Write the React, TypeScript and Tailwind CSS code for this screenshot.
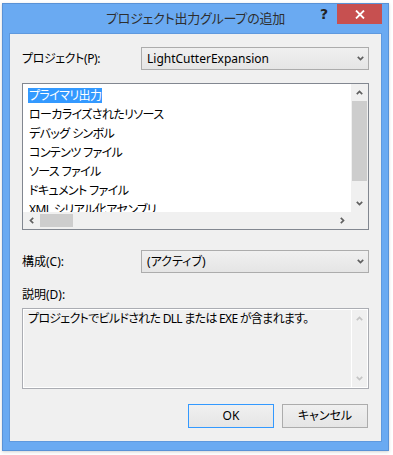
import React from 'react';

const items = [
  'プライマリ出力',
  'ローカライズされたリソース',
  'デバッグ シンボル',
  'コンテンツ ファイル',
  'ソース ファイル',
  'ドキュメント ファイル',
  'XML シリアル化アセンブリ',
];

const Chevron = ({ dir, color = '#606060' }: { dir: 'up' | 'down' | 'left' | 'right'; color?: string }) => {
  const d = {
    up: 'M0.8 4.2 L3.5 1.5 L6.2 4.2',
    down: 'M0.8 0.8 L3.5 3.5 L6.2 0.8',
    left: 'M4.2 0.8 L1.5 3.5 L4.2 6.2',
    right: 'M0.8 0.8 L3.5 3.5 L0.8 6.2',
  }[dir];
  const vertical = dir === 'up' || dir === 'down';
  return (
    <svg width={vertical ? 7 : 5} height={vertical ? 5 : 7} viewBox={vertical ? '0 0 7 5' : '0 0 5 7'}>
      <path d={d} fill="none" stroke={color} strokeWidth="1.7" />
    </svg>
  );
};

const Combo = ({ value }: { value: string }) => (
  <div className="w-[228px] h-[23px] border border-[#acacac] bg-gradient-to-b from-[#f0f0f0] to-[#e5e5e5] flex items-center pl-[5px] pr-[4px]">
    <span className="flex-1 text-[12px] leading-none text-black">{value}</span>
    <Chevron dir="down" />
  </div>
);

const Button = ({ label, focused }: { label: string; focused?: boolean }) => (
  <div
    className={
      'w-[86px] h-[24px] flex items-center justify-center text-[12px] text-black bg-gradient-to-b from-[#f0f0f0] to-[#e5e5e5] border ' +
      (focused ? 'border-[#3399ff]' : 'border-[#acacac]')
    }
  >
    {label}
  </div>
);

export default function App() {
  return (
    <div className="w-[393px] h-[455px] bg-white pt-[3px] pl-[2px] [font-family:'Noto_Sans','Noto_Sans_CJK_JP',sans-serif] [font-feature-settings:'palt']">
      <div className="w-[387px] h-[448px] bg-[#6aaaf2] border border-[#5a92d6] flex flex-col shadow-[0_1px_3px_rgba(0,0,0,0.18)]">
        {/* title bar */}
        <div className="h-[29px] relative flex items-center justify-center">
          <span className="text-[13px] tracking-[-0.2px] text-[#2e2e2e] leading-none">プロジェクト出力グループの追加</span>
          <div className="absolute top-0 right-[6px] flex">
            <div className="w-[26px] h-[20px] flex items-center justify-center text-[14px] font-bold text-[#222] leading-none [font-family:'DejaVu_Sans',sans-serif]">
              ?
            </div>
            <div className="w-[45px] h-[20px] bg-[#c75050] flex items-center justify-center">
              <svg width="10" height="9" viewBox="0 0 10 9">
                <path d="M1 0.5 L9 8.5 M9 0.5 L1 8.5" stroke="white" strokeWidth="1.8" />
              </svg>
            </div>
          </div>
        </div>

        {/* client area */}
        <div className="mx-[6px] h-[409px] bg-[#f0f0f0] border border-[#5f99de] flex flex-col px-[12px]">
          <div className="mt-[13px] h-[23px] flex items-center">
            <span className="w-[119px] text-[12px] tracking-[-0.4px] text-black">プロジェクト(P):</span>
            <Combo value="LightCutterExpansion" />
          </div>

          {/* list box */}
          <div className="mt-[13px] w-[347px] h-[147px] border border-[#828790] bg-white grid grid-cols-[1fr_17px] grid-rows-[1fr_17px]">
            <div className="overflow-hidden pt-[2px] pl-[5px]">
              {items.map((t, i) => (
                <div key={t} className="h-[19px] flex items-center">
                  <span
                    className={
                      'h-[15px] leading-[15px] px-[1px] text-[12px] tracking-[-0.6px] whitespace-nowrap ' +
                      (i === 0 ? 'bg-[#3399ff] text-white' : 'text-black')
                    }
                  >
                    {t}
                  </span>
                </div>
              ))}
            </div>
            <div className="row-span-2 bg-[#f0f0f0] flex flex-col">
              <div className="h-[17px] flex items-center justify-center">
                <Chevron dir="up" />
              </div>
              <div className="h-[80px] mx-[1px] bg-[#cdcdcd]" />
              <div className="flex-1" />
              <div className="h-[17px] flex items-center justify-center">
                <Chevron dir="down" />
              </div>
              <div className="h-[17px]" />
            </div>
            <div className="bg-[#f0f0f0] flex items-center">
              <div className="w-[17px] h-[17px] flex items-center justify-center">
                <Chevron dir="left" />
              </div>
              <div className="w-[33px] h-[13px] bg-[#cdcdcd]" />
              <div className="flex-1" />
              <div className="w-[17px] h-[17px] flex items-center justify-center">
                <Chevron dir="right" />
              </div>
            </div>
          </div>

          <div className="mt-[20px] h-[23px] flex items-center">
            <span className="w-[119px] text-[12px] text-black">構成(C):</span>
            <Combo value="(アクティブ)" />
          </div>

          <div className="mt-[14px] h-[16px] flex items-center text-[12px] text-black">説明(D):</div>

          {/* description */}
          <div className="mt-[5px] w-[347px] h-[81px] border border-[#abadb3] flex">
            <div className="flex-1 border border-white border-r-0 pl-[4px] pt-[1px] text-[12px] tracking-[-0.7px] leading-[16px] text-black">
              プロジェクトでビルドされた DLL または EXE が含まれます。
            </div>
            <div className="w-[17px] border border-white flex flex-col justify-between">
              <div className="h-[17px] flex items-center justify-center">
                <Chevron dir="up" color="#c4c4c4" />
              </div>
              <div className="h-[17px] flex items-center justify-center">
                <Chevron dir="down" color="#c4c4c4" />
              </div>
            </div>
          </div>

          <div className="mt-[15px] flex justify-end gap-[8px] pr-[1px]">
            <Button label="OK" focused />
            <Button label="キャンセル" />
          </div>
        </div>
      </div>
    </div>
  );
}
